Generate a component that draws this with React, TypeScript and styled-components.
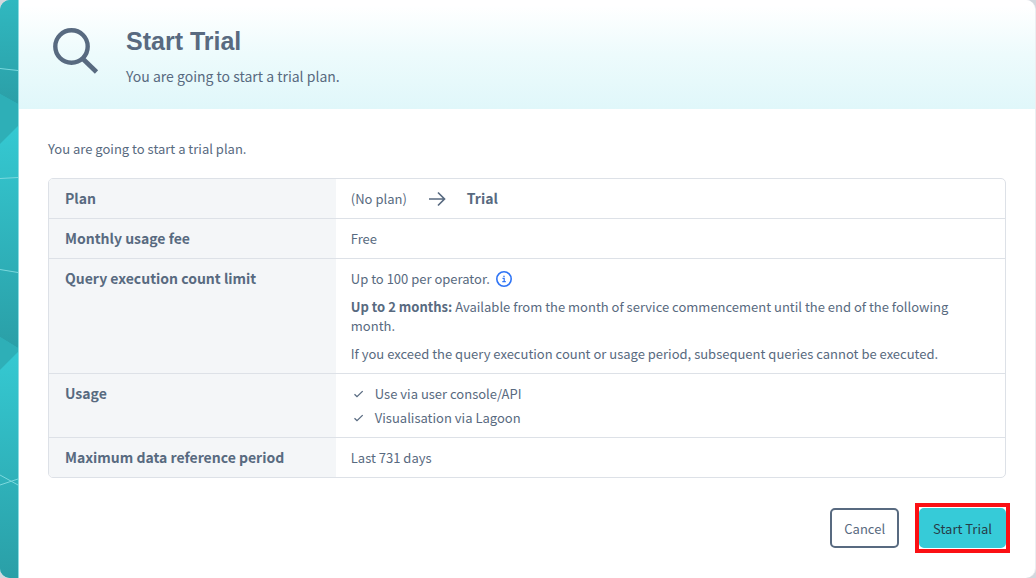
import React from "react";
import styled, { createGlobalStyle } from "styled-components";

const slate = "#586a80";
const line = "#dde1e7";

const GlobalStyle = createGlobalStyle`
  * { box-sizing: border-box; }
  body {
    margin: 0;
    background: #d3d8de;
    color: ${slate};
    font: 13px/19px "Noto Sans CJK JP", "Noto Sans", sans-serif;
  }
  h1, p, ul { margin: 0; padding: 0; }
`;

const Dialog = styled.main`
  display: flex;
  min-height: 100vh;
  overflow: hidden;
  border-radius: 10px;
  border-right: 1px solid #eceef1;
  background: #fff;
`;

const Rail = styled.aside`
  display: flex;
  flex: none;
  width: 19px;
  border-right: 1px solid #8fdce1;
  background: #2fb5be;
`;

const RailArt = styled.svg`
  width: 18px;
  height: auto;
  min-height: 100%;
`;

const Content = styled.div`
  flex: 1;
  min-width: 0;
`;

const Header = styled.header`
  display: flex;
  gap: 26px;
  padding: 27px 32px 23px;
  background: linear-gradient(#fff 5%, #edfbfc 50%, #e0f7fa);
`;

const Heading = styled.div`
  display: grid;
  gap: 11px;
`;

const Title = styled.h1`
  font: bold 25px/28px "Liberation Sans", Arial, sans-serif;
`;

const Subtitle = styled.p`
  font-size: 14px;
  line-height: 20px;
`;

const Body = styled.section`
  padding: 30px 29px 24px;
`;

const TableFrame = styled.div`
  margin-top: 20px;
  border: 1px solid ${line};
  border-radius: 5px;
  overflow: hidden;
`;

const Table = styled.table`
  width: 100%;
  border-spacing: 0;
  table-layout: fixed;

  tr + tr > * { border-top: 1px solid ${line}; }
`;

const Label = styled.th`
  width: 30%;
  padding: 10px 16px;
  background: #f4f6f8;
  text-align: left;
  vertical-align: top;
  font-size: 14px;
  font-weight: bold;
`;

const Value = styled.td`
  padding: 10px 15px;
  vertical-align: top;
`;

const PlanChange = styled.div`
  display: flex;
  align-items: center;
  gap: 20px;
`;

const Destination = styled.strong`
  font-size: 14px;
`;

const Notes = styled.div`
  display: grid;
  gap: 9px;
`;

const Limit = styled.p`
  display: flex;
  align-items: center;
  gap: 5px;
`;

const InfoButton = styled.button`
  display: flex;
  height: 18px;
  padding: 0;
  border: 0;
  background: none;
`;

const Features = styled.ul`
  display: grid;
  gap: 5px;
  list-style: none;
`;

const Feature = styled.li`
  display: flex;
  align-items: center;
  gap: 9px;
`;

const Actions = styled.footer`
  display: flex;
  justify-content: flex-end;
  align-items: center;
  gap: 16px;
  margin: 25px -4px 0 0;
`;

const Highlight = styled.div`
  display: flex;
  padding: 1px 0;
  border: 4px solid #fb1014;
`;

const Button = styled.button<{ $primary?: boolean }>`
  height: 40px;
  padding: 0 12px;
  border: 2px solid ${(p) => (p.$primary ? "#36cbd8" : slate)};
  border-radius: 5px;
  background: ${(p) => (p.$primary ? "#36cbd8" : "#fff")};
  color: ${(p) => (p.$primary ? "#263c48" : slate)};
  font: inherit;
`;

const SearchIcon = () => (
  <svg width="49" height="48" viewBox="0 0 49 48" fill="none" stroke={slate} aria-hidden="true">
    <circle cx="20.5" cy="19.5" r="16.2" strokeWidth="4.4" />
    <path d="M31.5 31.5 45.5 45" strokeWidth="4.6" />
  </svg>
);

const ArrowIcon = () => (
  <svg width="20" height="16" viewBox="0 0 20 16" fill="none" stroke={slate} strokeWidth="1.7" aria-label="to">
    <path d="M2 8h16M11 1.5 17.5 8 11 14.5" />
  </svg>
);

const InfoIcon = () => (
  <svg width="18" height="18" viewBox="0 0 18 18" fill="none" stroke="#2f74f5" aria-hidden="true">
    <circle cx="9" cy="9" r="7.2" strokeWidth="1.6" />
    <path d="M7.5 8.3h1.7v3.2M7.3 11.6h3.5" strokeWidth="1.2" />
    <circle cx="9" cy="6.3" r=".45" strokeWidth=".9" />
  </svg>
);

const CheckIcon = () => (
  <svg width="15" height="12" viewBox="0 0 15 12" fill="none" stroke={slate} strokeWidth="1.3" aria-hidden="true">
    <path d="M3.5 6.2 6 8.7l5.7-5.6" />
  </svg>
);

const RailPattern = () => (
  <RailArt viewBox="0 0 18 578" preserveAspectRatio="none" aria-hidden="true">
    <defs>
      <linearGradient id="shade" x1="0" y1="0" x2="0" y2="1">
        <stop offset="0" stopColor="#30b8c0" />
        <stop offset="1" stopColor="#2b9fa7" />
      </linearGradient>
      <linearGradient id="bright" x1="0" y1="0" x2="0" y2="1">
        <stop offset="0" stopColor="#35c9d2" />
        <stop offset="1" stopColor="#2a9fa7" />
      </linearGradient>
    </defs>
    <path fill="url(#shade)" d="M0 0h18v104L0 94z" />
    <path fill="#2eafb7" d="M0 94l18 10v23L0 144z" />
    <path fill="url(#bright)" d="M0 144l18-18v222L0 337z" />
    <path fill="#2eafb7" d="M0 337l18 11v4L0 370z" />
    <path fill="url(#bright)" d="M0 370l18-18v226H0z" />
    <path
      fill="none"
      stroke="#7bd8dd"
      d="M0 68.5l18 2M0 178.5l18-1M0 269.5l18 3M0 475l18 10M0 485l18-6"
    />
  </RailArt>
);

export default function App() {
  return (
    <>
      <GlobalStyle />
      <Dialog>
        <Rail><RailPattern /></Rail>
        <Content>
          <Header>
            <SearchIcon />
            <Heading>
              <Title>Start Trial</Title>
              <Subtitle>You are going to start a trial plan.</Subtitle>
            </Heading>
          </Header>
          <Body>
            <p>You are going to start a trial plan.</p>
            <TableFrame>
              <Table>
                <tbody>
                  <tr>
                    <Label scope="row">Plan</Label>
                    <Value>
                      <PlanChange>
                        <span>(No plan)</span>
                        <ArrowIcon />
                        <Destination>Trial</Destination>
                      </PlanChange>
                    </Value>
                  </tr>
                  <tr>
                    <Label scope="row">Monthly usage fee</Label>
                    <Value>Free</Value>
                  </tr>
                  <tr>
                    <Label scope="row">Query execution count limit</Label>
                    <Value>
                      <Notes>
                        <Limit>
                          Up to 100 per operator.
                          <InfoButton type="button" aria-label="About the limit"><InfoIcon /></InfoButton>
                        </Limit>
                        <p>
                          <strong>Up to 2 months:</strong> Available from the month of service commencement
                          until the end of the following month.
                        </p>
                        <p>
                          If you exceed the query execution count or usage period, subsequent queries
                          cannot be executed.
                        </p>
                      </Notes>
                    </Value>
                  </tr>
                  <tr>
                    <Label scope="row">Usage</Label>
                    <Value>
                      <Features>
                        <Feature><CheckIcon />Use via user console/API</Feature>
                        <Feature><CheckIcon />Visualisation via Lagoon</Feature>
                      </Features>
                    </Value>
                  </tr>
                  <tr>
                    <Label scope="row">Maximum data reference period</Label>
                    <Value>Last 731 days</Value>
                  </tr>
                </tbody>
              </Table>
            </TableFrame>
            <Actions>
              <Button type="button">Cancel</Button>
              <Highlight>
                <Button type="button" $primary>Start Trial</Button>
              </Highlight>
            </Actions>
          </Body>
        </Content>
      </Dialog>
    </>
  );
}
